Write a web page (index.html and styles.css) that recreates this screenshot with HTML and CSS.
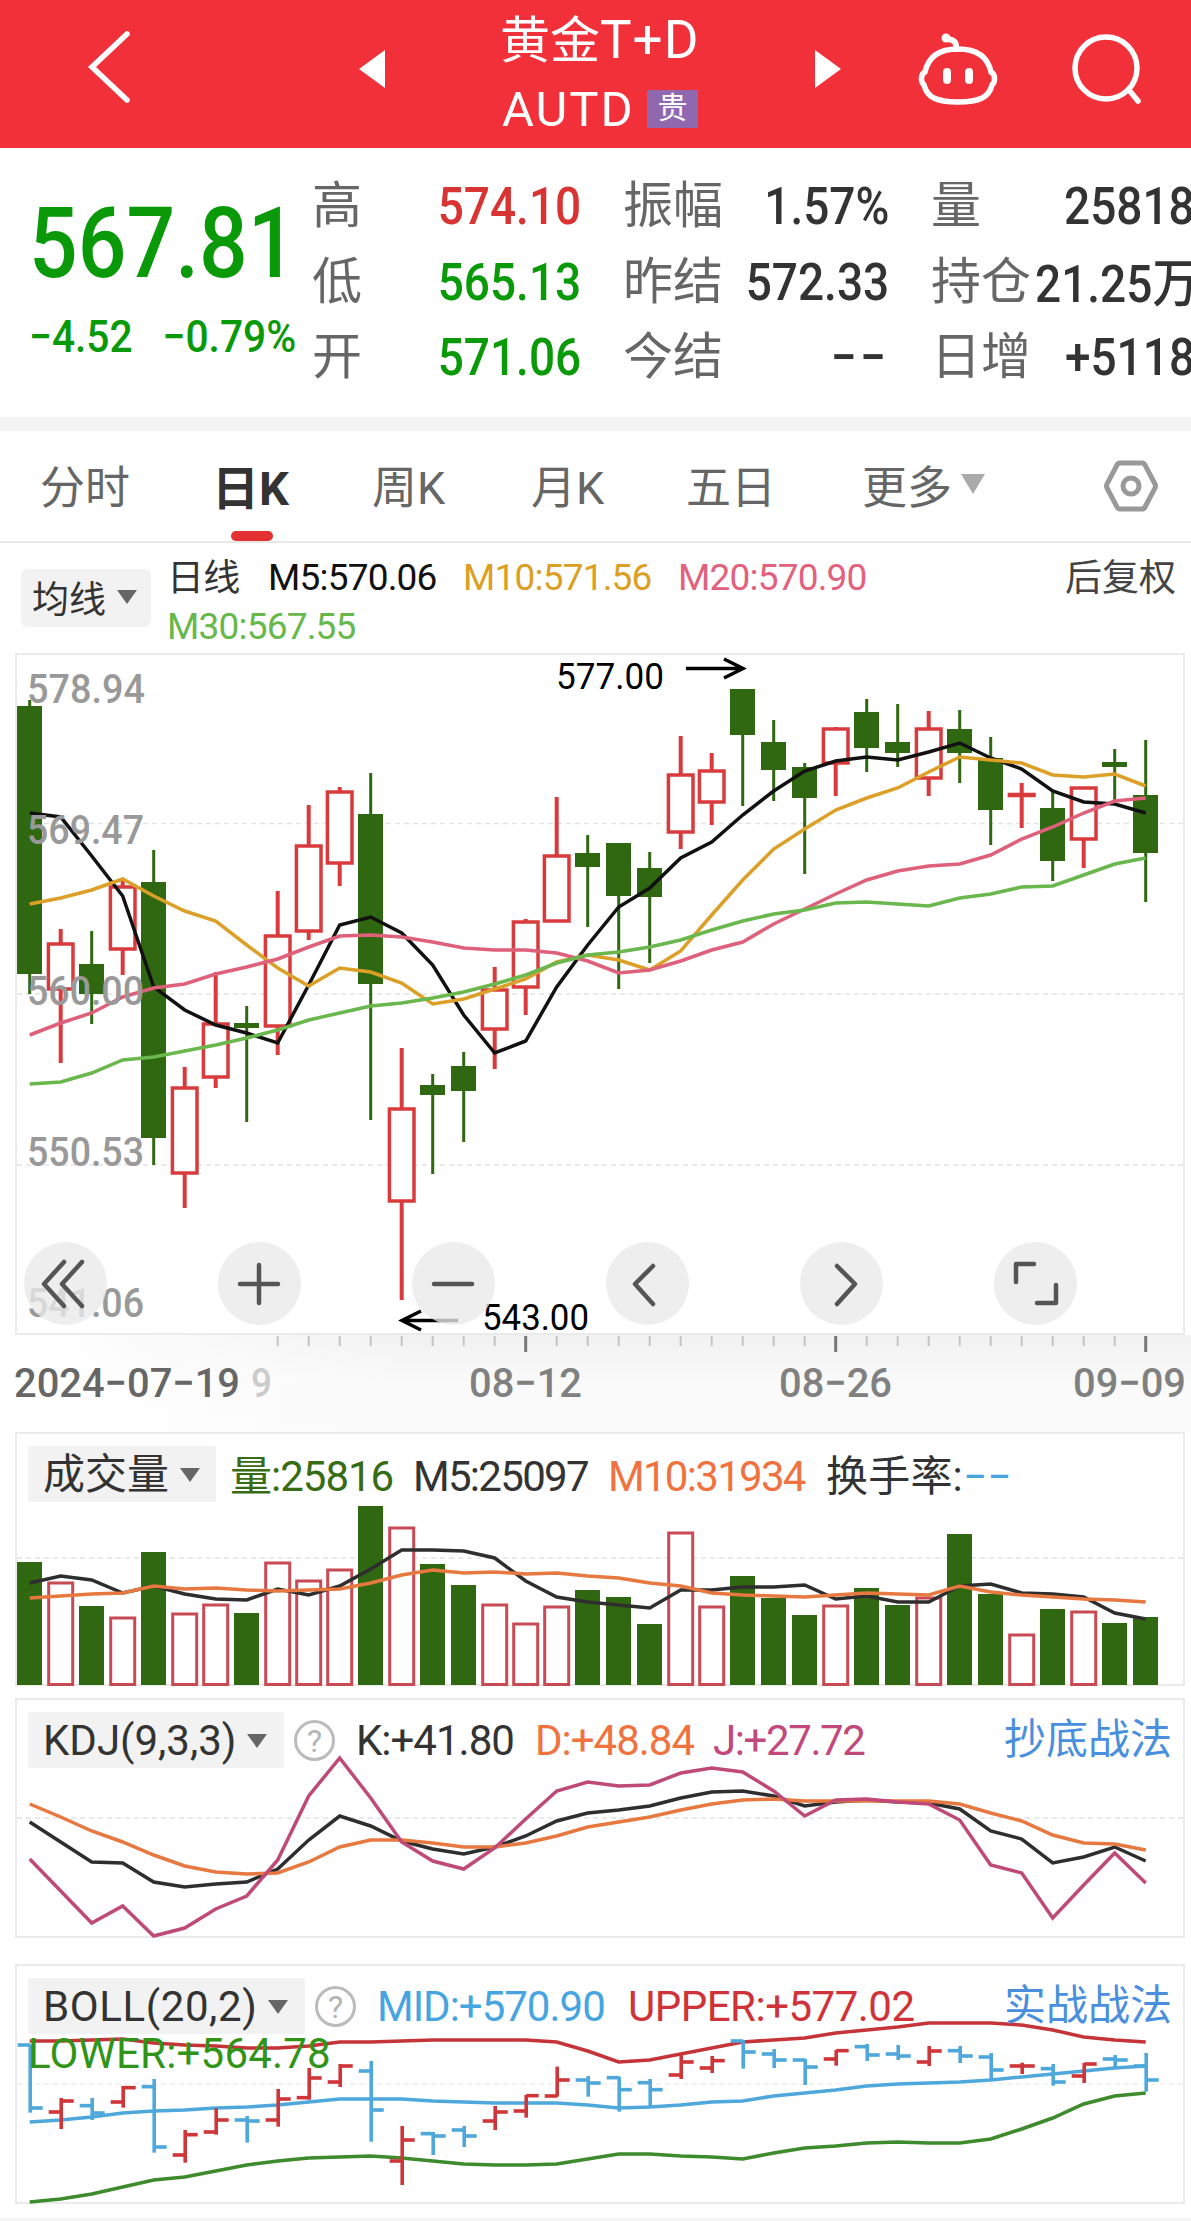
FILE: index.html
```html
<!DOCTYPE html>
<html lang="zh-CN">
<head>
    <meta charset="UTF-8">
    <title>黄金T+D</title>
    <link rel="stylesheet" href="styles.css">
</head>
<body>
    <!-- 顶部导航 -->
    <header class="header">
        <svg class="icon-back" width="46" height="76" viewBox="0 0 46 76"><path d="M41 5 6 38l35 33"/></svg>
        <svg class="icon-prev" width="26" height="38" viewBox="0 0 26 38"><path d="M26 0v38L0 19z"/></svg>
        <div class="title">
            <div class="title-name">黄金<span>T+D</span></div>
            <div class="title-code">AUTD<span class="badge">贵</span></div>
        </div>
        <svg class="icon-next" width="26" height="38" viewBox="0 0 26 38"><path d="M0 0v38l26-19z"/></svg>
        <svg class="icon-robot" width="80" height="72" viewBox="0 0 80 72">
            <path d="M40 16C20 16 10 25 7 39c-4 2-5 9-1 13 3 12 12 17 34 17s31-5 34-17c4-4 3-11-1-13-3-14-13-23-33-23z"/>
            <path d="M38 16c1-7-2-9-8-10" stroke-width="6"/>
            <circle class="dot" cx="28" cy="5" r="4.5"/>
            <path d="M29 39v8M51 39v8" stroke-width="8"/>
        </svg>
        <svg class="icon-search" width="70" height="72" viewBox="0 0 70 72"><circle cx="34" cy="33" r="31"/><path d="m57 55 9 11"/></svg>
    </header>

    <!-- 行情数据 -->
    <section class="quote">
        <div class="quote-main">
            <div class="price">567.81</div>
            <div class="change"><span>−4.52</span><span>−0.79%</span></div>
        </div>
        <div class="stats">
            <div class="stat"><span>高</span><b class="red">574.10</b></div>
            <div class="stat"><span>振幅</span><b>1.57%</b></div>
            <div class="stat"><span>量</span><b>25818</b></div>
            <div class="stat"><span>低</span><b class="green">565.13</b></div>
            <div class="stat"><span>昨结</span><b>572.33</b></div>
            <div class="stat"><span>持仓</span><b class="unit">21.25万</b></div>
            <div class="stat"><span>开</span><b class="green">571.06</b></div>
            <div class="stat"><span>今结</span><b class="dash">−−</b></div>
            <div class="stat"><span>日增</span><b>+5118</b></div>
        </div>
    </section>

    <!-- 周期切换 -->
    <nav class="tabs">
        <span class="tab">分时</span>
        <span class="tab active">日K</span>
        <span class="tab">周K</span>
        <span class="tab">月K</span>
        <span class="tab">五日</span>
        <span class="tab">更多<i class="arrow"></i></span>
        <svg class="icon-set" width="54" height="52" viewBox="0 0 54 52"><path d="M16 3h22q2 0 3 2l10 19q1 2 0 4L41 47q-1 2-3 2H16q-2 0-3-2L3 28q-1-2 0-4L13 5q1-2 3-2z"/><circle cx="27" cy="26" r="8"/></svg>
    </nav>

    <!-- 均线 -->
    <section class="ma">
        <div class="select">均线<i class="arrow"></i></div>
        <div class="ma-values">
            <span class="ma-name">日线</span>
            <span class="c-m5">M5:570.06</span>
            <span class="c-m10">M10:571.56</span>
            <span class="c-m20">M20:570.90</span>
            <span class="c-m30">M30:567.55</span>
        </div>
        <div class="ma-right">后复权</div>
    </section>

    <!-- K线图 -->
    <section class="panel kline">
        <svg id="kline" width="1166" height="678" viewBox="17 655 1166 678"></svg>
        <div class="tools">
            <button><svg viewBox="0 0 83 83"><path d="M40 20 20 42l20 22M58 20 38 42l20 22"/></svg></button>
            <button><svg viewBox="0 0 83 83"><path d="M41 23v38M22 42h38"/></svg></button>
            <button><svg viewBox="0 0 83 83"><path d="M22 42h38"/></svg></button>
            <button><svg viewBox="0 0 83 83"><path d="M47 24 29 42l18 20"/></svg></button>
            <button><svg viewBox="0 0 83 83"><path d="m37 24 18 18-18 20"/></svg></button>
            <button><svg viewBox="0 0 83 83"><path d="M22 40V22h18M62 43v18H43"/></svg></button>
        </div>
    </section>
    <div class="axis"><svg id="axis" width="1191" height="97" viewBox="0 1335 1191 97"></svg></div>

    <!-- 成交量 -->
    <section class="panel vol">
        <svg id="vol" width="1166" height="252" viewBox="17 1434 1166 252"></svg>
        <div class="legend legend-vol">
            <div class="select">成交量<i class="arrow"></i></div>
            <span class="c-vol">量:25816</span>
            <span class="tight">M5:25097</span>
            <span class="tight c-orange">M10:31934</span>
            <span class="turn">换手率:<em>−−</em></span>
        </div>
    </section>

    <!-- KDJ -->
    <section class="panel kdj">
        <svg id="kdj" width="1166" height="236" viewBox="17 1700 1166 236"></svg>
        <div class="legend legend-kdj">
            <div class="select">KDJ(9,3,3)<i class="arrow"></i></div>
            <span class="help">?</span>
            <span>K:+41.80</span>
            <span class="c-orange">D:+48.84</span>
            <span class="c-j">J:+27.72</span>
            <a class="link">抄底战法</a>
        </div>
    </section>

    <!-- BOLL -->
    <section class="panel boll">
        <svg id="boll" width="1166" height="236" viewBox="17 1966 1166 236"></svg>
        <div class="legend legend-boll">
            <div class="select">BOLL(20,2)<i class="arrow"></i></div>
            <span class="help">?</span>
            <span class="c-mid">MID:+570.90</span>
            <span class="c-upper">UPPER:+577.02</span>
            <a class="link">实战战法</a>
        </div>
        <div class="lower">LOWER:+564.78</div>
    </section>
    <div class="footer-band"></div>
    <script src="chart.js"></script>
</body>
</html>
```
FILE: styles.css
```css
* {
    box-sizing: border-box;
}

body {
    margin: 0;
    width: 1191px;
    height: 2221px;
    overflow: hidden;
    background-color: #fff;
    color: #333;
    font-family: Roboto, "Noto Sans CJK SC", sans-serif;
    white-space: nowrap;
}

svg {
    display: block;
    overflow: visible;
}

i, em {
    font-style: normal;
}

/* 顶部导航 */
.header {
    height: 148px;
    padding-left: 86px;
    display: flex;
    background-color: #f2303a;
    color: #fff;
}

.header svg {
    fill: none;
    stroke: #fff;
    stroke-width: 5.5;
    stroke-linecap: round;
    flex: none;
}

.icon-back {
    margin-top: 29px;
}

.header .icon-prev,
.header .icon-next {
    margin-top: 50px;
    fill: #fff;
    stroke: none;
}

.icon-prev {
    margin-left: 227px;
}

.title {
    width: 196px;
    margin: 0 117px;
}

.title-name {
    height: 76px;
    margin-left: -2px;
    padding-top: 2px;
    line-height: 76px;
    font-size: 50px;
}

.title-name span {
    font-size: 53px;
    letter-spacing: 1px;
}

.title-code {
    display: flex;
    align-items: center;
    justify-content: space-between;
    height: 66px;
    font-size: 49px;
    letter-spacing: 2px;
}

.badge {
    width: 51px;
    height: 38px;
    line-height: 36px;
    background-color: #9068b0;
    font-size: 30px;
    letter-spacing: 0;
    text-align: center;
}

.icon-robot {
    margin: 33px 0 0 77px;
}

.icon-robot .dot {
    fill: #fff;
    stroke: none;
}

.icon-search {
    margin: 35px 0 0 74px;
}

/* 行情数据 */
.quote {
    display: flex;
    height: 269px;
}

.quote-main {
    flex: none;
    width: 312px;
    padding: 48px 0 0 29px;
    color: #099909;
}

.price {
    width: 283px;
    height: 96px;
    line-height: 96px;
    font-size: 98px;
    font-weight: 500;
    transform: scaleX(0.875);
    transform-origin: left;
}

.change {
    display: flex;
    gap: 33px;
    width: 283px;
    margin-top: 15px;
    line-height: 60px;
    font-size: 45px;
    font-weight: 500;
    transform: scaleX(0.905);
    transform-origin: left;
}

.stats {
    display: grid;
    grid-template-columns: 269px 266px 267px;
    grid-auto-rows: 75.5px;
    column-gap: 42px;
    padding-top: 18px;
}

.stat {
    display: flex;
    align-items: center;
    justify-content: space-between;
    font-size: 50px;
}

.stat span {
    margin-bottom: 5px;
    color: #666;
}

.stat b {
    margin-top: 6px;
    font-size: 52px;
    font-weight: 500;
    transform: scaleX(0.885);
    transform-origin: right;
}

.stat:nth-child(3n) b {
    margin-right: 3px;
}

.stat .dash {
    letter-spacing: 4px;
}

.stat .unit {
    margin-top: 0;
    margin-left: 4px;
    transform-origin: left;
}

.stat .red {
    color: #d83434;
}

.stat .green {
    color: #099909;
}

/* 周期切换 */
.tabs {
    display: grid;
    grid-template-columns: 176px 156px 159px 155px 176px 242px 54px;
    align-items: center;
    height: 126px;
    padding-left: 40px;
    border-top: 14px solid #f4f4f4;
    border-bottom: 2px solid #e8e8e8;
}

.tab {
    display: flex;
    align-items: center;
    height: 110px;
    padding-bottom: 4px;
    font-size: 45px;
    color: #666;
}

.tab.active {
    position: relative;
    margin-left: -4px;
    color: #333;
    font-size: 47px;
    font-weight: 700;
}

.tab.active::after {
    content: "";
    position: absolute;
    left: 19px;
    bottom: 0;
    width: 42px;
    height: 10px;
    border-radius: 5px;
    background-color: #e33030;
}

.arrow {
    display: inline-block;
    width: 0;
    height: 0;
    margin-left: 11px;
    border: 10px solid transparent;
    border-top: 14px solid #666;
    border-bottom: 0;
}

.tab .arrow {
    margin-left: 9px;
    border-width: 20px 12px 0;
    border-top-color: #aaa;
}

.icon-set {
    fill: none;
    stroke: #999;
    stroke-width: 5;
}

/* 均线 */
.ma {
    display: flex;
    height: 110px;
    padding-left: 21px;
    font-size: 37px;
}

.select {
    display: flex;
    align-items: center;
    border-radius: 6px;
    background-color: #f2f2f2;
}

.ma .select {
    width: 130px;
    height: 58px;
    margin-top: 26px;
    padding-left: 11px;
    padding-bottom: 2px;
}

.ma-values {
    display: grid;
    grid-template-columns: 101px 195px 215px 387px;
    grid-template-rows: 49px 49px;
    align-items: center;
    width: 898px;
    padding-top: 10px;
    margin-left: 16px;
    letter-spacing: -0.8px;
}

.ma-name {
    padding-bottom: 5px;
}

.c-m5 {
    color: #111;
}

.c-m10 {
    color: #dc9f24;
}

.c-m20 {
    color: #e2617d;
}

.c-m30 {
    grid-column: 1 / 3;
    color: #67b84b;
}

.ma-right {
    line-height: 71px;
    color: #444;
}

/* 图表 */
.panel {
    position: relative;
    width: 1170px;
    margin-left: 15px;
    border: 2px solid #ebebeb;
}

.kline {
    height: 682px;
}

.tools {
    position: absolute;
    top: 587px;
    left: 7px;
    display: flex;
    gap: 111px;
}

.tools button {
    width: 83px;
    height: 83px;
    padding: 0;
    border: none;
    border-radius: 50%;
    background-color: rgba(233, 233, 233, 0.78);
}

.tools path {
    fill: none;
    stroke: #555;
    stroke-width: 4.5;
    stroke-linecap: round;
    stroke-linejoin: round;
}

.axis {
    height: 97px;
    background: linear-gradient(to right, #fff 3%, rgba(255, 255, 255, 0) 35%), linear-gradient(#f1f1f1, #fafafa 50%, #fbfbfb);
}

.vol {
    height: 254px;
}

.kdj {
    height: 240px;
    margin-top: 12px;
}

.boll {
    height: 240px;
    margin-top: 26px;
}

.legend {
    position: absolute;
    top: 12px;
    left: 11px;
    display: grid;
    grid-template-rows: 56px;
    align-items: center;
    font-size: 42px;
    line-height: 52px;
    letter-spacing: -1px;
}

.legend > span,
.legend .select {
    padding-top: 2px;
}

.legend .select {
    height: 56px;
    padding-left: 15px;
    border-radius: 2px;
    letter-spacing: 0;
}

.legend-vol {
    grid-template-columns: 188px 181px 195px 217px 300px;
}

.legend-vol > span {
    margin-top: 3px;
}

.legend-vol .c-vol {
    padding-left: 14px;
}

.legend-vol .tight {
    padding-left: 16px;
    letter-spacing: -1.7px;
}

.legend-vol .turn {
    padding-left: 17px;
    letter-spacing: 0.2px;
}

.legend-kdj {
    grid-template-columns: 256px 72px 179px 178px 291px 170px;
}

.legend-kdj .c-j {
    letter-spacing: -1.4px;
}

.legend-boll {
    grid-template-columns: 277px 72px 251px 376px 170px;
}

.legend-boll .select {
    letter-spacing: 0.6px;
}

.legend .help {
    width: 41px;
    height: 41px;
    margin-left: 10px;
    padding-top: 0;
    border: 3px solid #bbb;
    border-radius: 50%;
    color: #b3b3b3;
    font-size: 32px;
    line-height: 36px;
    letter-spacing: 0;
    text-align: center;
}

.lower {
    position: absolute;
    top: 63px;
    left: 11px;
    line-height: 50px;
    font-size: 42px;
    letter-spacing: 0.2px;
    color: #2f9418;
}

.c-vol {
    color: #376b14;
}

.c-orange {
    color: #f0733f;
}

.c-j {
    color: #c3487b;
}

.c-mid,
.turn em {
    color: #46a5e0;
}

.legend .c-upper {
    color: #cf3238;
    letter-spacing: -0.5px;
}

.link {
    color: #4a8fdd;
    font-size: 42px;
    letter-spacing: 0;
}

.footer-band {
    height: 3px;
    margin-top: 14px;
    background-color: #f5f5f5;
}

/* 图表内文字 */
.y-label {
    fill: #999;
    font-size: 41px;
    font-weight: 500;
}

.mark {
    fill: #000;
    font-size: 36px;
}

.mark-line {
    fill: none;
    stroke: #000;
    stroke-width: 3.5;
}

.date {
    fill: #808080;
    font-size: 41px;
    font-weight: 500;
}

.date-first {
    fill: #666;
}

.date-ghost {
    fill: #ccc;
}
```
FILE: chart.js
```js
var GREEN = '#306812', RED = '#d93b3d', VOL_RED = '#c84a55', DARK = '#2e2e2e';
var ORANGE = '#e67840', BLUE = '#4ea8dc', STEP = 31, START = 29.7;

function px(i) {
    return START + i * STEP;
}

function line(points, color) {
    var p = points.map(function (y, i) { return px(i).toFixed(1) + ',' + y; }).join(' ');
    return '<polyline points="' + p + '" fill="none" stroke="' + color + '" stroke-width="3.5"/>';
}

function seg(x1, y1, x2, y2, color, width) {
    return '<path d="M' + x1 + ' ' + y1 + 'L' + x2 + ' ' + y2 + '" stroke="' + color + '" stroke-width="' + width + '"/>';
}

function grid(y, color) {
    return '<path d="M17 ' + y + 'H1183" stroke="' + (color || '#e2e2e2') + '" stroke-width="1.5" stroke-dasharray="5 4"/>';
}

function text(x, y, w, cls, str) {
    return '<text x="' + x + '" y="' + y + '" textLength="' + w + '" lengthAdjust="spacingAndGlyphs" class="' + cls + '">' + str + '</text>';
}

function box(x, y, w, h, color, hollow, stroke) {
    return '<rect x="' + x + '" y="' + y + '" width="' + w + '" height="' + h + '" ' +
        (hollow ? 'fill="#fff" stroke="' + color + '" stroke-width="' + stroke + '"' : 'fill="' + color + '"') + '/>';
}

// 涨跌, 最高, 实体上沿, 实体下沿, 最低
var candles = [
    ['G', 700, 706, 974, 994], ['R', 929, 944, 989, 1063], ['G', 931, 964, 994, 1024], ['R', 881, 887, 949, 975],
    ['G', 850, 882, 1138, 1165], ['R', 1067, 1088, 1173, 1208], ['R', 972, 1024, 1077, 1088], ['G', 1006, 1023, 1028, 1122],
    ['R', 891, 936, 1026, 1055], ['R', 805, 846, 931, 940], ['R', 787, 792, 863, 886], ['G', 773, 814, 984, 1120],
    ['R', 1048, 1109, 1201, 1300], ['G', 1074, 1085, 1095, 1174], ['G', 1052, 1066, 1091, 1142], ['R', 967, 990, 1029, 1069],
    ['R', 919, 922, 987, 1015], ['R', 797, 856, 921, 921], ['G', 835, 853, 867, 927], ['G', 843, 843, 896, 989],
    ['G', 852, 868, 897, 963], ['R', 736, 775, 832, 849], ['R', 753, 771, 802, 825], ['G', 689, 689, 735, 806],
    ['G', 720, 742, 770, 801], ['G', 763, 767, 798, 874], ['R', 727, 729, 763, 796], ['G', 699, 712, 748, 772],
    ['G', 704, 742, 753, 767], ['R', 711, 729, 778, 796], ['G', 710, 729, 753, 783], ['G', 737, 758, 810, 845],
    ['R', 783, 794.5, 795.5, 828], ['G', 790, 808, 861, 881], ['R', 788, 788, 839, 868], ['G', 749, 762, 767, 800],
    ['G', 740, 795, 853, 902]
];
var m5 = [813, 817, 856, 896, 987, 1010, 1025, 1033, 1043, 985, 925, 917, 933, 965, 1015, 1053, 1041, 987, 945, 907, 888, 858, 842, 815, 791, 771, 761, 757, 760, 752, 743, 758, 769, 791, 802, 804, 813];
var m10 = [904, 898, 890, 879, 896, 911, 921, 945, 968, 986, 968, 972, 983, 1004, 999, 989, 979, 962, 955, 960, 970, 951, 915, 880, 849, 829, 810, 798, 788, 772, 757, 760, 763, 775, 777, 774, 786];
var m20 = [1035, 1023, 1013, 997, 988, 984, 974, 967, 959, 947, 936, 935, 937, 942, 948, 950, 950, 953, 961, 973, 970, 961, 950, 942, 924, 909, 894, 880, 871, 866, 864, 855, 839, 827, 813, 801, 798];
var m30 = [1084, 1082, 1073, 1060, 1057, 1051, 1045, 1038, 1030, 1020, 1013, 1006, 1003, 998, 992, 984, 975, 963, 955, 952, 947, 940, 930, 921, 914, 910, 903, 902, 904, 906, 898, 894, 887, 886, 875, 864, 858];

// K线图
var out = grid(823.5) + grid(994) + grid(1165);
candles.forEach(function (c, i) {
    var x = px(i), up = c[0] === 'R', color = up ? RED : GREEN;
    out += seg(x, c[1], x, c[4], color, up ? 4 : 3);
    out += up ? box(x - 12.3, c[2], 24.6, c[3] - c[2], color, true, 3.5) : box(x - 12.7, c[2], 25, c[3] - c[2], color);
});
out += line(m5, '#111') + line(m10, '#dca028') + line(m20, '#df607a') + line(m30, '#69b74d');
out += text(27, 702.5, 118, 'y-label', '578.94') + text(27, 843.5, 117, 'y-label', '569.47') + text(27, 1004.5, 117, 'y-label', '560.00') +
    text(27, 1165.5, 117, 'y-label', '550.53') + text(27, 1316.5, 117, 'y-label', '541.06');
out += text(556, 689, 108, 'mark', '577.00') + text(482, 1330, 107, 'mark', '543.00');
out += '<path class="mark-line" d="M686 668.5h56M724 659l19 9.500-19 9.500M458 1320.500h-55M421 1311l-19 9.500 19 9.500"/>';
document.getElementById('kline').innerHTML = out;

// 时间轴
out = '';
for (var i = 8; i < 37; i++) {
    var major = i % 10 === 6;
    out += seg(px(i), 1336, px(i), major ? 1352 : 1346, major ? '#777' : '#c4c4c4', major ? 3 : 2);
}
out += text(251, 1397, 21, 'date date-ghost', '9');
out += text(14, 1397, 226, 'date date-first', '2024−07−19') + text(469, 1397, 113, 'date', '08−12') +
    text(779, 1397, 113, 'date', '08−26') + text(1073, 1397, 113, 'date', '09−09');
document.getElementById('axis').innerHTML = out;

// 成交量
var vols = [1562, 1583, 1606, 1618, 1552, 1614, 1605, 1613, 1563, 1581, 1570, 1506, 1528, 1564, 1585, 1605, 1624, 1607, 1590, 1597, 1624, 1533, 1607, 1576, 1598, 1615, 1606, 1588, 1605, 1598, 1534, 1594, 1635, 1609, 1612, 1623, 1617];
var v5 = [1583, 1576, 1580, 1593, 1586, 1594, 1599, 1600, 1589, 1595, 1586, 1569, 1550, 1550, 1551, 1558, 1581, 1597, 1602, 1605, 1608, 1590, 1590, 1587, 1587, 1585, 1599, 1596, 1602, 1602, 1586, 1584, 1593, 1594, 1597, 1613, 1619];
var v10 = [1598, 1596, 1594, 1593, 1586, 1589, 1588, 1590, 1591, 1590, 1589, 1583, 1575, 1570, 1573, 1572, 1574, 1573, 1576, 1578, 1583, 1586, 1593, 1595, 1596, 1597, 1595, 1593, 1594, 1595, 1586, 1592, 1595, 1597, 1599, 1600, 1602];
out = grid(1558);
vols.forEach(function (y, i) {
    var up = candles[i][0] === 'R';
    out += up ? box(px(i) - 12, y, 24, 1684.5 - y, VOL_RED, true, 3) : box(px(i) - 12.7, y, 25, 1685 - y, GREEN);
});
out += line(v5, DARK) + line(v10, ORANGE);
document.getElementById('vol').innerHTML = out;

// KDJ
var k = [1822, 1842, 1862, 1863, 1882, 1887, 1884, 1882, 1869, 1840, 1816, 1826, 1841, 1849, 1854, 1847, 1836, 1821, 1813, 1810, 1806, 1798, 1792, 1791, 1796, 1806, 1802, 1800, 1802, 1803, 1809, 1831, 1839, 1863, 1857, 1847, 1861];
var d = [1804, 1817, 1831, 1842, 1855, 1866, 1872, 1874, 1873, 1862, 1847, 1840, 1840, 1843, 1847, 1847, 1843, 1836, 1827, 1822, 1817, 1810, 1804, 1800, 1799, 1801, 1801, 1801, 1801, 1801, 1804, 1813, 1821, 1835, 1843, 1844, 1850];
var j = [1859, 1891, 1923, 1906, 1936, 1928, 1909, 1896, 1860, 1796, 1758, 1798, 1842, 1861, 1869, 1848, 1819, 1791, 1782, 1786, 1785, 1773, 1768, 1772, 1791, 1816, 1800, 1799, 1802, 1804, 1820, 1865, 1873, 1918, 1885, 1853, 1883];
document.getElementById('kdj').innerHTML = grid(1818) + line(k, DARK) + line(d, ORANGE) + line(j, '#bf4a78');

// BOLL
var upper = [2041, 2041, 2040, 2039, 2043, 2045, 2046, 2048, 2048, 2046, 2042, 2042, 2041, 2040, 2040, 2040, 2040, 2042, 2051, 2062, 2060, 2054, 2048, 2042, 2040, 2038, 2033, 2030, 2027, 2023, 2023, 2023, 2025, 2030, 2037, 2040, 2042];
var mid = [2122, 2120, 2117, 2113, 2111, 2110, 2108, 2107, 2105, 2102, 2099, 2099, 2099, 2101, 2102, 2103, 2103, 2103, 2105, 2108, 2107, 2105, 2102, 2101, 2096, 2093, 2090, 2086, 2084, 2083, 2082, 2080, 2077, 2074, 2071, 2068, 2066];
var lower = [2202, 2199, 2194, 2187, 2180, 2177, 2171, 2165, 2161, 2158, 2157, 2156, 2158, 2161, 2164, 2165, 2165, 2164, 2159, 2154, 2154, 2156, 2157, 2159, 2153, 2148, 2146, 2143, 2142, 2143, 2143, 2139, 2129, 2118, 2104, 2096, 2093];
// 最高, 最低, 开, 收
var bars = [
    [283, 488, 285, 474], [444, 537, 486, 453], [444, 510, 467, 489], [408, 473, 456, 413], [387, 608, 410, 591],
    [540, 638, 615, 554], [475, 554, 546, 510], [498, 578, 510, 513], [417, 530, 510, 447], [354, 449, 443, 384],
    [342, 411, 396, 348], [333, 575, 363, 480], [528, 705, 633, 570], [546, 615, 551, 558], [528, 591, 540, 558],
    [468, 540, 513, 486], [435, 503, 483, 437], [350, 440, 438, 390], [378, 440, 390, 399], [380, 485, 383, 419],
    [387, 470, 398, 419], [311, 387, 375, 336], [318, 369, 354, 332], [270, 356, 273, 306], [297, 354, 312, 330],
    [327, 405, 330, 351], [300, 347, 327, 302], [282, 333, 290, 315], [285, 330, 312, 318], [288, 348, 336, 303],
    [288, 339, 302, 318], [309, 387, 321, 360], [338, 372, 348, 348], [342, 407, 356, 396], [339, 399, 378, 342],
    [315, 352, 327, 330], [309, 425, 348, 390]
];
out = grid(2084, '#f0f0f0') + line(upper, '#c43439') + line(mid, BLUE) + line(lower, '#3d8b2c');
bars.forEach(function (b, i) {
    var x = px(i) + 0.5, y = b.map(function (v) { return 1950 + v / 3; });
    var color = candles[i][0] === 'R' ? '#cf3539' : BLUE;
    out += seg(x, y[0], x, y[1], color, 3.6) + seg(x - 12.5, y[2], x, y[2], color, 3.6) + seg(x, y[3], x + 12.5, y[3], color, 3.6);
});
document.getElementById('boll').innerHTML = out;
```
